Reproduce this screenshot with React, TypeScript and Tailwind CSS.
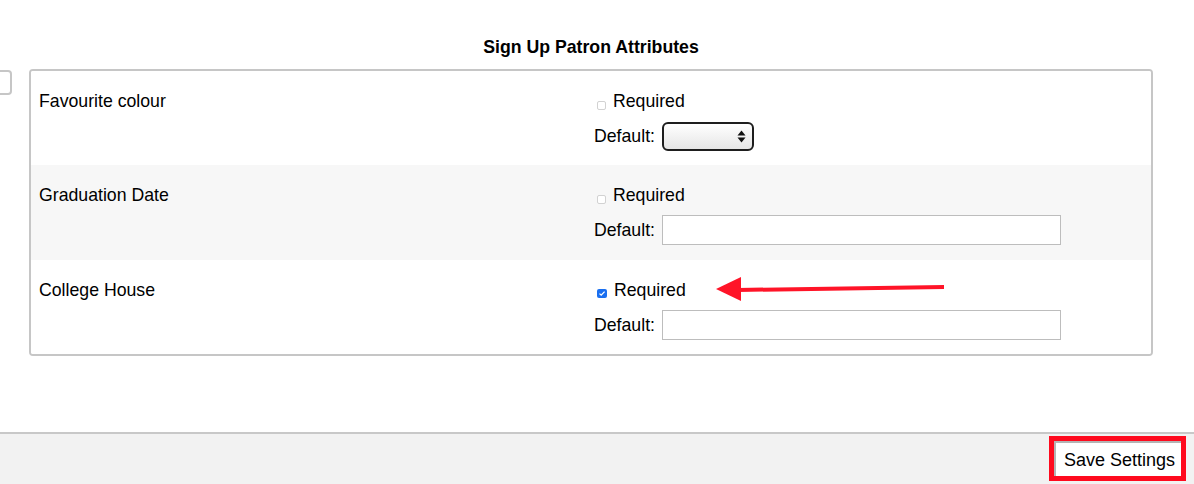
import React from 'react';

type Attr = {
  label: string;
  required: boolean;
  kind: 'select' | 'text';
};

const attributes: Attr[] = [
  { label: 'Favourite colour', required: false, kind: 'select' },
  { label: 'Graduation Date', required: false, kind: 'text' },
  { label: 'College House', required: true, kind: 'text' },
];

function Checkbox({ checked }: { checked: boolean }) {
  if (checked) {
    return (
      <span className="inline-flex w-[10px] h-[9px] mb-[2px] rounded-[2px] bg-[#1a6ff0] items-center justify-center">
        <svg width="8" height="7" viewBox="0 0 8 7">
          <path d="M1.5 3.6 L3.2 5.2 L6.6 1.6" fill="none" stroke="#fff" strokeWidth="1.3" />
        </svg>
      </span>
    );
  }
  return <span className="inline-block w-[9px] h-[9px] mb-[1px] rounded-[2px] border border-[#d2d2d2] bg-white" />;
}

function FakeSelect() {
  return (
    <div className="w-[92px] h-[29px] border-2 border-[#1e1e1e] rounded-[6px] bg-gradient-to-b from-white to-[#e6e6e6] flex items-center justify-end pr-[6px]">
      <svg width="9" height="13" viewBox="0 0 9 13">
        <path d="M4.5 0.5 L8.5 5.5 L0.5 5.5 Z" fill="#111" />
        <path d="M4.5 12.5 L8.5 7.5 L0.5 7.5 Z" fill="#111" />
      </svg>
    </div>
  );
}

function AttrRow({ attr, shaded }: { attr: Attr; shaded: boolean }) {
  return (
    <div className={`grid grid-cols-[563px_1fr] ${shaded ? 'h-[95px] bg-[#f7f7f7]' : 'h-[94px] bg-white'}`}>
      <div className="pl-[8px] pt-[20px] leading-[20px]">{attr.label}</div>
      <div className="pt-[20px]">
        <div className="flex items-end h-[20px] leading-[20px] pl-[3px]">
          <Checkbox checked={attr.required} />
          <span className="ml-[7px]">Required</span>
        </div>
        <div className="flex items-center mt-[10px] h-[30px]">
          <span className="w-[68px]">Default:</span>
          {attr.kind === 'select' ? (
            <FakeSelect />
          ) : (
            <div className="w-[399px] h-[30px] border border-[#bdbdbd] bg-white" />
          )}
        </div>
      </div>
    </div>
  );
}

export default function App() {
  return (
    <div
      className="relative w-[1194px] h-[484px] flex flex-col bg-white text-[17.7px] text-black overflow-hidden"
      style={{ fontFamily: '"Liberation Sans", Arial, sans-serif' }}
    >
      <div className="flex items-start pt-[37px]">
        <div className="w-[12px] h-[25px] mt-[33px] border-2 border-l-0 border-[#c6c6c6] rounded-r-[4px]" />
        <div className="ml-[17px] w-[1124px]">
          <h2 className="text-center font-bold text-[17.7px] leading-[20px] h-[32px]">
            Sign Up Patron Attributes
          </h2>
          <div className="border-2 border-[#c6c6c6] rounded-[4px] overflow-hidden">
            {attributes.map((a, i) => (
              <AttrRow key={a.label} attr={a} shaded={i === 1} />
            ))}
          </div>
        </div>
      </div>

      {/* annotation arrow */}
      <svg className="absolute left-[714px] top-[276px]" width="232" height="26" viewBox="0 0 232 26">
        <path d="M2 13 L27 1 L27 25 Z" fill="#ff1428" />
        <path d="M24 14 L230 11" stroke="#ff1428" strokeWidth="4" />
      </svg>

      <div className="mt-auto h-[52px] border-t-2 border-[#c8c8c8] bg-[#f2f2f2] flex justify-end items-start pt-[2px] pr-[8px]">
        <div className="border-[5px] border-[#ff0a1e]">
          <button className="h-[35px] pl-[8px] pr-[6px] bg-white border-l-2 border-t-2 border-[#b4b4b4] text-[18px] leading-[20px]">
            Save Settings
          </button>
        </div>
      </div>
    </div>
  );
}
